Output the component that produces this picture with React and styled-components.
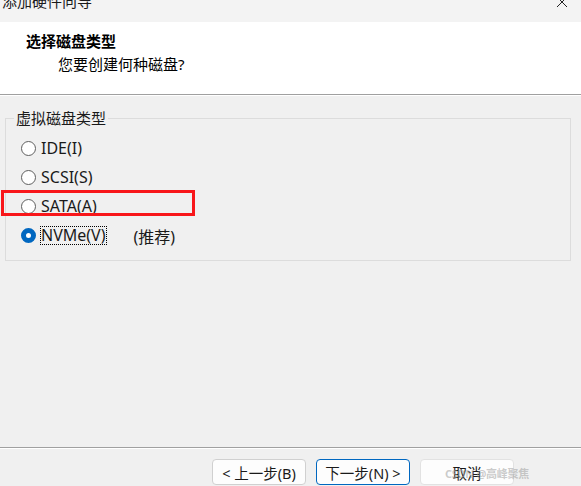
import React from 'react';
import styled, { createGlobalStyle } from 'styled-components';

const GlobalStyle = createGlobalStyle`
  html, body {
    margin: 0;
    padding: 0;
    overflow: hidden;
  }
  body {
    font-family: "Noto Sans", "Noto Sans CJK SC", sans-serif;
    color: #000;
  }
`;

const Window = styled.div`
  position: relative;
  width: 581px;
  height: 486px;
  display: flex;
  flex-direction: column;
  background: #f0f0f0;
  overflow: hidden;
`;

const TitleBar = styled.div`
  height: 22px;
  flex: none;
  display: flex;
  justify-content: space-between;
  background: #f3f3f3;
  overflow: hidden;
`;

const TitleText = styled.span`
  margin: -9px 0 0 2px;
  font-size: 15px;
  line-height: 20px;
  color: #1a1a1a;
`;

const CloseIcon = styled.svg`
  margin: -4px 13px 0 0;
`;

const Header = styled.div`
  height: 73px;
  flex: none;
  box-sizing: border-box;
  padding: 9px 0 0 26px;
  background: #fff;
  border-bottom: 1px solid #a0a0a0;
`;

const HeaderTitle = styled.div`
  font-size: 15px;
  font-weight: bold;
  line-height: 20px;
`;

const HeaderSub = styled.div`
  margin: 3px 0 0 32px;
  font-size: 15px;
  line-height: 20px;
`;

const Body = styled.div`
  flex: 1;
  padding: 13px 10px 0 5px;
  border-top: 1px solid #fff;
`;

const Group = styled.fieldset`
  margin: 0;
  height: 152px;
  box-sizing: border-box;
  padding: 7px 0 0 15px;
  border: 1px solid #dcdcdc;
  border-radius: 0;
  display: flex;
  flex-direction: column;
`;

const Legend = styled.legend`
  margin-left: -7px;
  padding: 0 2px;
  font-size: 15px;
  line-height: 18px;
  color: #1a1a1a;
`;

const Option = styled.label`
  height: 29px;
  display: flex;
  align-items: center;
  font-size: 16px;
  color: #1a1a1a;
`;

const Radio = styled.span`
  width: 15px;
  height: 15px;
  box-sizing: border-box;
  border-radius: 50%;
  margin-right: 4px;
  flex: none;
  border: ${p => (p.checked ? '5px solid #0067c0' : '1px solid #5f5f5f')};
  background: #fff;
`;

const OptionText = styled.span`
  padding: 0;
  line-height: 17px;
  border: 1px ${p => (p.focused ? 'dotted #000' : 'solid transparent')};
`;

const Hint = styled.span`
  margin-left: 27px;
`;

const Highlight = styled.div`
  position: absolute;
  left: 1px;
  top: 190px;
  width: 194px;
  height: 26px;
  box-sizing: border-box;
  border: 3px solid #f8161a;
`;

const Footer = styled.div`
  flex: none;
  height: 37px;
  border-top: 1px solid #a0a0a0;
  box-shadow: inset 0 1px 0 #fff;
  display: flex;
  align-items: flex-end;
  justify-content: flex-end;
  gap: 10px;
  padding: 0 67px 1px 0;
`;

const Button = styled.button`
  width: 94px;
  height: 26px;
  box-sizing: border-box;
  border-radius: 4px;
  border: 1px solid ${p => (p.primary ? '#0067c0' : p.muted ? '#e2e2e2' : '#d0d0d0')};
  background: #fdfdfd;
  font-family: inherit;
  font-size: 14.5px;
  color: #1a1a1a;
  padding: 0;
`;

const Watermark = styled.span`
  position: absolute;
  left: 445px;
  top: 465px;
  font-size: 11px;
  font-weight: bold;
  letter-spacing: -0.3px;
  color: rgba(160, 160, 160, 0.55);
  pointer-events: none;
`;

const options = [
  { label: 'IDE(I)' },
  { label: 'SCSI(S)' },
  { label: 'SATA(A)' },
  { label: 'NVMe(V)', checked: true, hint: '(推荐)' },
];

const App = () => {
  return (
    <>
      <GlobalStyle />
      <Window>
        <TitleBar>
          <TitleText>添加硬件向导</TitleText>
          <CloseIcon width="12" height="12" viewBox="0 0 12 12">
            <path d="M1 1 L11 11 M11 1 L1 11" stroke="#222" strokeWidth="1" fill="none" />
          </CloseIcon>
        </TitleBar>
        <Header>
          <HeaderTitle>选择磁盘类型</HeaderTitle>
          <HeaderSub>您要创建何种磁盘?</HeaderSub>
        </Header>
        <Body>
          <Group>
            <Legend>虚拟磁盘类型</Legend>
            {options.map(o => (
              <Option key={o.label}>
                <Radio checked={o.checked} />
                <OptionText focused={o.checked}>{o.label}</OptionText>
                {o.hint && <Hint>{o.hint}</Hint>}
              </Option>
            ))}
          </Group>
        </Body>
        <Footer>
          <Button>&lt; 上一步(B)</Button>
          <Button primary>下一步(N) &gt;</Button>
          <Button muted>取消</Button>
        </Footer>
        <Highlight />
        <Watermark>CSDN @高峰聚焦</Watermark>
      </Window>
    </>
  );
};

export default App;
